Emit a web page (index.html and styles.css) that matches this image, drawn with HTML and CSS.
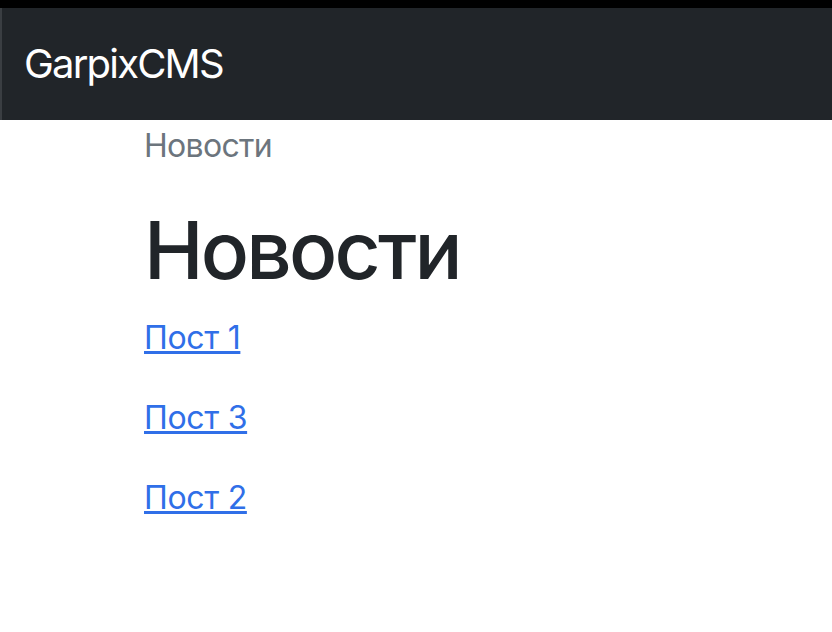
FILE: index.html
```html
<!DOCTYPE html>
<html lang="ru">
<head>
  <meta charset="UTF-8">
  <meta name="viewport" content="width=device-width, initial-scale=1.0">
  <title>Новости</title>
  <link rel="stylesheet" href="styles.css">
</head>
<body>
  <div class="topbar"></div>
  <nav class="navbar">
    <a class="navbar-brand" href="#">GarpixCMS</a>
  </nav>
  <main class="container">
    <nav class="breadcrumb">Новости</nav>
    <h1>Новости</h1>
    <p><a href="#">Пост 1</a></p>
    <p><a href="#">Пост 3</a></p>
    <p><a href="#">Пост 2</a></p>
  </main>
</body>
</html>
```

FILE: styles.css
```css
body {
  margin: 0;
  font-family: Inter, "Noto Sans", sans-serif;
  font-size: 32px;
  line-height: 1.5;
  color: #212529;
  background-color: #fff;
}
.topbar {
  height: 8px;
  background-color: #000;
}
.navbar {
  background-color: #212529;
  border-left: 2px solid #3a3e42;
  padding: 16px 22px;
}
.navbar-brand {
  display: inline-block;
  padding: 10px 0;
  font-size: 40px;
  line-height: 1.5;
  color: #fff;
  text-decoration: none;
  letter-spacing: -1.8px;
}
.container {
  padding: 2px 144px 0;
}
.breadcrumb {
  color: #6c757d;
  margin-bottom: 32px;
  letter-spacing: -0.7px;
}
h1 {
  margin: 0 0 16px;
  font-size: 80px;
  font-weight: 500;
  line-height: 1.2;
  letter-spacing: -2.8px;
}
p {
  margin: 0 0 32px;
  letter-spacing: -0.3px;
}
a {
  color: #306fe8;
}
```
